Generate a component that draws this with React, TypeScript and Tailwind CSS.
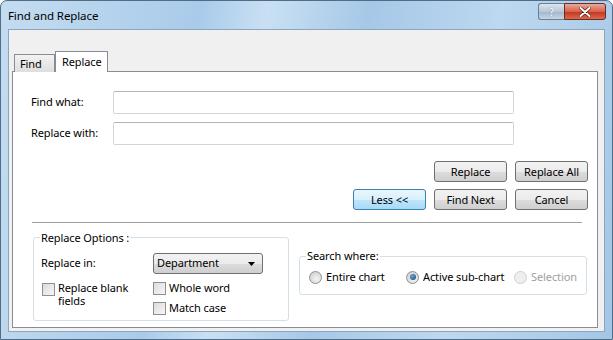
import React from 'react';

const font = { fontFamily: '"Segoe UI", "Noto Sans", sans-serif' };

const VistaButton: React.FC<{ label: string; focused?: boolean }> = ({ label, focused }) => (
  <button
    className={`relative h-[21px] w-[73px] rounded-[3px] border text-[11px] leading-none text-black ${
      focused
        ? 'border-[#3c7fb1] bg-[linear-gradient(to_bottom,#eaf6fd_0%,#d9f0fc_50%,#bee6fd_51%,#a7d9f5_100%)]'
        : 'border-[#707070] bg-[linear-gradient(to_bottom,#f2f2f2_0%,#ebebeb_50%,#dddddd_51%,#cfcfcf_100%)]'
    }`}
  >
    {label}
  </button>
);

const CheckBox: React.FC = () => (
  <span className="inline-block h-[13px] w-[13px] shrink-0 border border-[#8f8f8f] bg-[linear-gradient(135deg,#dcdcdc,#f6f6f6)]" />
);

const Radio: React.FC<{ checked?: boolean; disabled?: boolean }> = ({ checked, disabled }) => (
  <span
    className={`flex h-[13px] w-[13px] shrink-0 items-center justify-center rounded-full border ${
      disabled
        ? 'border-[#cfcfcf] bg-[#eeeeee]'
        : 'border-[#8f8f8f] bg-[radial-gradient(circle_at_60%_65%,#f4f4f4,#c9c9c9)]'
    }`}
  >
    {checked && (
      <span className="h-[6px] w-[6px] rounded-full bg-[radial-gradient(circle_at_40%_35%,#6aa9d8,#0e3f6e)]" />
    )}
  </span>
);

const App: React.FC = () => {
  return (
    <div
      className="h-[340px] w-[613px] overflow-hidden bg-white text-[11px] tracking-[-0.1px] text-black"
      style={font}
    >
      <div className="flex h-[340px] w-[613px] flex-col rounded-t-[7px] border border-[#4f6d88] bg-[linear-gradient(100deg,#c4dcf0_0%,#a9cbea_30%,#c9e0f3_40%,#a6c8e7_55%,#bdd8f0_75%,#a3c6e6_100%)]">
        {/* title bar */}
        <div className="flex h-[28px] items-start">
          <span className="ml-[7px] mt-[6px] text-[11.5px] text-black">Find and Replace</span>
          <div className="ml-auto mr-[6px] mt-[2px] flex">
            <div className="flex h-[17px] w-[26px] items-center justify-center rounded-l-[3px] border border-r-0 border-[#6d7f91] bg-[linear-gradient(to_bottom,#dbe6f0,#b7c8d8_50%,#a2b6c9_51%,#c5d6e6)] text-[11px] font-bold leading-none text-[#eef4f9]">
              <span className="[text-shadow:0_0_1px_#4a5d70]">?</span>
            </div>
            <div className="flex h-[17px] w-[42px] items-center justify-center rounded-r-[3px] border border-[#6b2a24] bg-[linear-gradient(to_bottom,#e9a99a,#d9614c_50%,#c4351f_51%,#d86b4a)]">
              <svg width="12" height="10" viewBox="0 0 12 10">
                <path d="M1.5 1 L10.5 9 M10.5 1 L1.5 9" stroke="#5a1a10" strokeWidth="3.4" strokeLinecap="round" />
                <path d="M1.5 1 L10.5 9 M10.5 1 L1.5 9" stroke="#ffffff" strokeWidth="2" strokeLinecap="round" />
              </svg>
            </div>
          </div>
        </div>

        {/* client area */}
        <div className="mx-[7px] flex h-[303px] flex-col border border-[#8ea5bb] bg-[#f0f0f0] px-[3px] pt-[21px]">
          {/* tabs */}
          <div className="relative z-10 flex h-[20px] items-end">
            <div className="mb-[-1px] ml-[2px] flex h-[18px] w-[41px] items-center border border-b-0 border-[#898c95] bg-[linear-gradient(to_bottom,#f2f2f2,#dedede)] pl-[5px] pt-[2px]">
              Find
            </div>
            <div className="mb-[-1px] flex h-[21px] w-[53px] items-start border border-b-0 border-[#898c95] bg-white pl-[6px] pt-[2px]">
              Replace
            </div>
          </div>

          {/* tab panel */}
          <div className="flex h-[257px] w-[586px] flex-col border border-[#898c95] bg-white">
            <div className="mt-[19px] flex items-center">
              <span className="ml-[18px] w-[82px]">Find what:</span>
              <div className="h-[23px] w-[401px] rounded-[2px] border border-[#d5d5d5] border-t-[#b5b5b5]" />
            </div>
            <div className="mt-[8px] flex items-center">
              <span className="ml-[18px] w-[82px]">Replace with:</span>
              <div className="h-[23px] w-[401px] rounded-[2px] border border-[#d5d5d5] border-t-[#b5b5b5]" />
            </div>

            <div className="mr-[9px] mt-[16px] flex justify-end gap-[8px]">
              <VistaButton label="Replace" />
              <VistaButton label="Replace All" />
            </div>
            <div className="mr-[9px] mt-[7px] flex justify-end gap-[8px]">
              <VistaButton label="Less <<" focused />
              <VistaButton label="Find Next" />
              <VistaButton label="Cancel" />
            </div>

            <div className="ml-[19px] mr-[15px] mt-[12px] h-[2px] border-t border-b border-t-[#a0a0a0] border-b-white" />

            <div className="mt-[13px] flex items-start">
              {/* Replace options group */}
              <div className="relative ml-[20px] h-[84px] w-[256px] rounded-[3px] border border-[#d5dfe5]">
                <span className="absolute left-[6px] top-[-8px] bg-white px-[1px] leading-[16px]">Replace Options :</span>
                <div className="mt-[15px] flex items-center">
                  <span className="ml-[7px] w-[112px]">Replace in:</span>
                  <div className="flex h-[21px] w-[110px] items-center rounded-[3px] border border-[#707070] bg-[linear-gradient(to_bottom,#f2f2f2_0%,#ebebeb_50%,#dddddd_51%,#cfcfcf_100%)] pl-[3px] pr-[7px]">
                    <span className="flex-1">Department</span>
                    <svg width="7" height="4" viewBox="0 0 7 4">
                      <path d="M0 0 H7 L3.5 4 Z" fill="#000" />
                    </svg>
                  </div>
                </div>
                <div className="mt-[7px] flex">
                  <div className="ml-[8px] flex w-[111px] items-start gap-[3px]">
                    <span className="mt-[2px]"><CheckBox /></span>
                    <div className="flex flex-col">
                      <span className="leading-[14px]">Replace blank</span>
                      <span className="leading-[12px]">fields</span>
                    </div>
                  </div>
                  <div className="flex flex-col gap-[6px]">
                    <div className="flex items-center gap-[3px]">
                      <CheckBox />
                      <span className="leading-[14px]">Whole word</span>
                    </div>
                    <div className="flex items-center gap-[3px]">
                      <CheckBox />
                      <span className="leading-[14px]">Match case</span>
                    </div>
                  </div>
                </div>
              </div>

              {/* Search where group */}
              <div className="relative ml-[10px] mt-[19px] h-[39px] w-[288px] rounded-[3px] border border-[#d5dfe5]">
                <span className="absolute left-[6px] top-[-9px] bg-white px-[1px] leading-[16px]">Search where:</span>
                <div className="mt-[12px] flex items-center">
                  <div className="ml-[9px] flex w-[97px] items-center gap-[4px]">
                    <Radio />
                    <span>Entire chart</span>
                  </div>
                  <div className="flex w-[108px] items-center gap-[4px]">
                    <Radio checked />
                    <span>Active sub-chart</span>
                  </div>
                  <div className="flex items-center gap-[4px] text-[#a0a0a0]">
                    <Radio disabled />
                    <span>Selection</span>
                  </div>
                </div>
              </div>
            </div>
          </div>
        </div>
      </div>
    </div>
  );
};

export default App;
